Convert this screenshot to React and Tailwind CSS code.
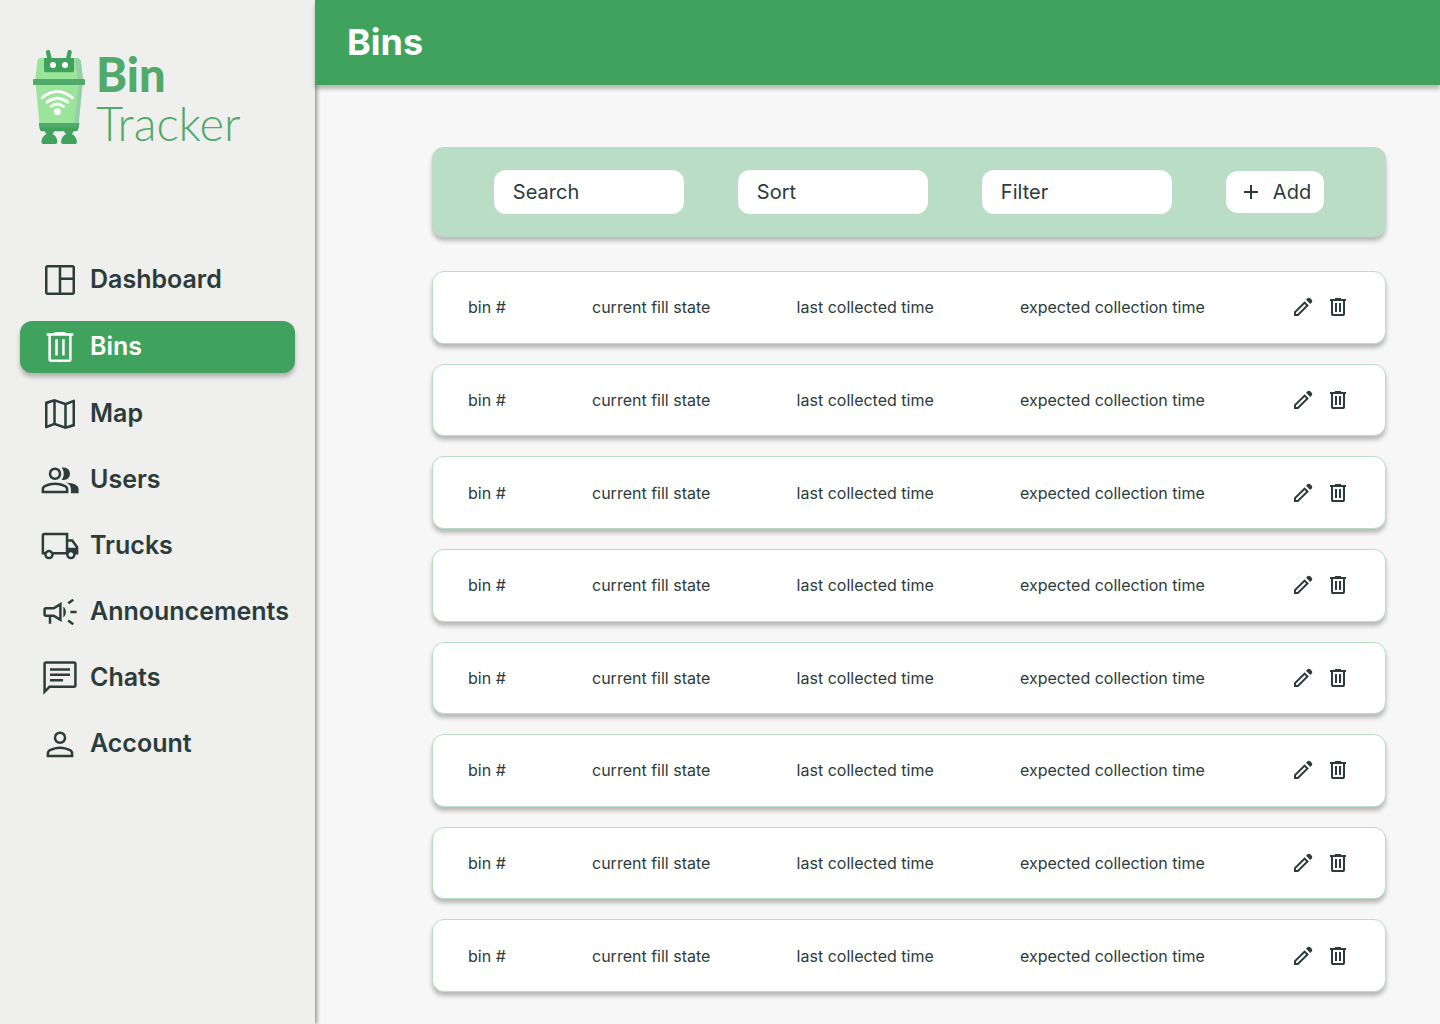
import React from "react";

const ICONS = {
  dashboard:
    "M9 42q-1.2 0-2.1-.9Q6 40.2 6 39V9q0-1.2.9-2.1Q7.8 6 9 6h30q1.2 0 2.1.9.9.9.9 2.1v30q0 1.2-.9 2.1-.9.9-2.1.9ZM9 39h13.5V9H9Zm16.5 0H39V24H25.5Zm0-18H39V9H25.5Z",
  bins: "M13.05 42q-1.2 0-2.1-.9-.9-.9-.9-2.1V10.5H8v-3h9.4V6h13.2v1.5H40v3h-2.05V39q0 1.2-.9 2.1-.9.9-2.1.9Zm21.9-31.5h-21.9V39h21.9Zm-16.6 23.7h3V14.75h-3Zm8.3 0h3V14.75h-3Z",
  map: "M30.6 42 17.3 37.35 7.9 41.1q-.7.3-1.3-.1-.6-.35-.6-1.15V10.5q0-.5.3-.9.3-.4.75-.55L17.3 5.95l13.3 4.6 9.5-3.7q.65-.25 1.27.1.63.3.63 1.05v29.9q0 .4-.28.7-.27.3-.67.45ZM29.1 38.3V13.2L18.9 9.6v25.1ZM32.1 38.3 39 36V10.6l-6.9 2.65ZM9 37.4l6.9-2.7V9.6L9 11.95Z",
  users:
    "M1.9 40v-4.7q0-1.75.9-3.175Q3.7 30.7 5.3 30q3.65-1.6 6.575-2.3Q14.8 27 18 27t6.1.7q2.9.7 6.55 2.3 1.6.7 2.525 2.125.925 1.425.925 3.175V40Zm35.2 0v-4.7q0-3.15-1.6-5.175t-4.2-3.275q3.45.4 6.5 1.175t4.95 1.775q1.65.95 2.6 2.35.95 1.4.95 3.15V40ZM18 23.95q-3.3 0-5.4-2.1-2.1-2.1-2.1-5.4 0-3.3 2.1-5.4 2.1-2.1 5.4-2.1 3.3 0 5.4 2.1 2.1 2.1 2.1 5.4 0 3.3-2.1 5.4-2.1 2.1-5.4 2.1Zm18-7.5q0 3.3-2.1 5.4-2.1 2.1-5.4 2.1-.55 0-1.225-.075T26.05 23.6q1.2-1.25 1.825-3.075.625-1.825.625-4.075t-.625-3.975Q27.25 10.75 26.05 9.3q.55-.15 1.225-.25t1.225-.1q3.3 0 5.4 2.1 2.1 2.1 2.1 5.4ZM4.9 37h26.2v-1.7q0-.8-.475-1.55T29.45 32.7q-3.6-1.6-6.05-2.15-2.45-.55-5.4-.55-2.95 0-5.425.55T6.5 32.7q-.7.3-1.15 1.05-.45.75-.45 1.55ZM18 20.95q1.95 0 3.225-1.275Q22.5 18.4 22.5 16.45q0-1.95-1.275-3.225Q19.95 11.95 18 11.95q-1.95 0-3.225 1.275Q13.5 14.5 13.5 16.45q0 1.95 1.275 3.225Q16.05 20.95 18 20.95Z",
  trucks:
    "M10.75 39.95q-2.4 0-4.075-1.675T5 34.2H1.95V11q0-1.2.9-2.1.9-.9 2.1-.9h29v7.95h5.5L46 25v9.2h-3.2q0 2.4-1.675 4.075T37.05 39.95q-2.4 0-4.075-1.675T31.3 34.2H16.5q0 2.4-1.675 4.075T10.75 39.95Zm0-3q1.15 0 1.95-.8t.8-1.95q0-1.15-.8-1.95t-1.95-.8q-1.15 0-1.95.8T8 34.2q0 1.15.8 1.95t1.95.8ZM4.95 31.2h.95q.8-1.15 2.05-1.95t2.8-.8q1.5 0 2.775.825T15.6 31.2h15.35V11h-26Zm32.1 5.75q1.15 0 1.95-.8t.8-1.95q0-1.15-.8-1.95t-1.95-.8q-1.15 0-1.95.8t-.8 1.95q0 1.15.8 1.95t1.95.8ZM33.95 26h9.2l-5.2-7.05h-4Z",
  announcements:
    "M36.5 25.5v-3H44v3ZM39 40l-6.05-4.5 1.8-2.4 6.05 4.5ZM34.85 14.8l-1.8-2.4L39 8l1.8 2.4ZM10.5 38v-8H7q-1.25 0-2.125-.875T4 27v-6q0-1.25.875-2.125T7 18h9l10-6v24l-10-6h-2.5v8Zm12.5-7.3V17.3L16.85 21H7v6h9.85ZM28 30.7V17.3q1.35 1.2 2.175 2.925Q31 21.95 31 24q0 2.05-.825 3.775Q29.35 29.5 28 30.7Z",
  chats:
    "M12 28.15h15.65v-3H12Zm0-6.45h24v-3H12Zm0-6.45h24v-3H12ZM4 44V7q0-1.15.9-2.075Q5.8 4 7 4h34q1.15 0 2.075.925Q44 5.85 44 7v26q0 1.15-.925 2.075Q42.15 36 41 36H12Zm3-7.25L10.75 33H41V7H7Z",
  account:
    "M24 23.95q-3.3 0-5.4-2.1-2.1-2.1-2.1-5.4 0-3.3 2.1-5.4 2.1-2.1 5.4-2.1 3.3 0 5.4 2.1 2.1 2.1 2.1 5.4 0 3.3-2.1 5.4-2.1 2.1-5.4 2.1ZM8 40v-4.7q0-1.9.95-3.25T11.4 30q3.35-1.5 6.425-2.25Q20.9 27 24 27q3.1 0 6.15.775t6.4 2.225q1.55.7 2.5 2.05.95 1.35.95 3.25V40Zm3-3h26v-1.7q0-.8-.475-1.525-.475-.725-1.175-1.075-3.2-1.55-5.85-2.125Q26.85 30 24 30t-5.55.575q-2.7.575-5.85 2.125-.7.35-1.15 1.075Q11 34.5 11 35.3Zm13-16.05q1.95 0 3.225-1.275Q28.5 18.4 28.5 16.45q0-1.95-1.275-3.225Q25.95 11.95 24 11.95q-1.95 0-3.225 1.275Q19.5 14.5 19.5 16.45q0 1.95 1.275 3.225Q22.05 20.95 24 20.95Z",
};

const SMALL_ICONS = {
  add: "M11 19v-6H5v-2h6V5h2v6h6v2h-6v6Z",
  edit: "M5 19h1.4l8.625-8.625-1.4-1.4L5 17.6ZM19.3 8.925l-4.25-4.2 1.4-1.4q.575-.575 1.413-.575.837 0 1.412.575l1.4 1.4q.575.575.6 1.388.025.812-.55 1.387ZM17.85 10.4 7.25 21H3v-4.25l10.6-10.6Z",
  remove:
    "M7 21q-.825 0-1.412-.587Q5 19.825 5 19V6H4V4h5V3h6v1h5v2h-1v13q0 .825-.587 1.413Q17.825 21 17 21ZM17 6H7v13h10ZM9 17h2V8H9Zm4 0h2V8h-2Z",
};

const NAV = [
  { label: "Dashboard", icon: "dashboard" },
  { label: "Bins", icon: "bins", active: true },
  { label: "Map", icon: "map" },
  { label: "Users", icon: "users" },
  { label: "Trucks", icon: "trucks" },
  { label: "Announcements", icon: "announcements" },
  { label: "Chats", icon: "chats" },
  { label: "Account", icon: "account" },
];

const BINS = [1, 2, 3, 4, 5, 6, 7, 8];

function NavIcon({ name }) {
  return (
    <svg viewBox="0 0 48 48" className="size-10 shrink-0 fill-current" fillRule="evenodd" aria-hidden="true">
      <path d={ICONS[name]} />
    </svg>
  );
}

function SmallIcon({ name }) {
  return (
    <svg viewBox="0 0 24 24" className="size-6 shrink-0 fill-current" fillRule="evenodd" aria-hidden="true">
      <path d={SMALL_ICONS[name]} />
    </svg>
  );
}

function Robot() {
  return (
    <svg viewBox="36 27 162 288" className="h-24 w-[54px] shrink-0" aria-hidden="true">
      <path d="M62 54H170Q181 55 183 66L189 118 176 250H58L46 118 52 64Q54 54 62 54Z" fill="#9be59a" />
      <path d="M164 54H168Q181 55 183 66L189 118 176 250H163L176 134Z" fill="#94cfa6" />
      <path d="M84 36 89 58M149 36 144 58" stroke="#40a35d" strokeWidth="13" strokeLinecap="round" />
      <path d="M72 54h90v38q0 5-5 5H77q-5 0-5-5Z" fill="#40a35d" />
      <circle cx="99" cy="75" r="9" fill="#fff" />
      <circle cx="135" cy="75" r="9" fill="#fff" />
      <rect x="39" y="117" width="156" height="18" rx="2" fill="#50ab6b" />
      <path d="M67 173Q112 136 157 173M81 186Q112 163 143 186M94 199Q112 185 130 199" fill="none" stroke="#fff" strokeWidth="9" strokeLinecap="round" />
      <circle cx="112" cy="215" r="10" fill="#fff" />
      <path d="M57 249H178L175 267Q174 274 167 274H67Q60 274 59 267Z" fill="#40a35d" />
      <path d="M57 249H178L176 262H59Z" fill="#50ab6b" />
      <path d="M74 272H103Q101 280 97 282 112 289 112 306 112 312 106 312H70Q64 312 64 306 65 289 80 282 76 280 74 272ZM132 272H161Q159 280 155 282 170 289 171 306 171 312 165 312H129Q123 312 123 306 124 289 139 282 134 280 132 272Z" fill="#40a35d" />
    </svg>
  );
}

function Sidebar() {
  return (
    <aside className="relative z-10 w-[315px] shrink-0 bg-[#efefed] px-5 pt-[49px] shadow-[2px_0_4px_rgba(0,0,0,0.4)]">
      <a href="#home" className="flex h-24 items-center gap-[10px] pl-3 text-[#50ab6b]">
        <Robot />
        <span className="flex flex-col pt-1 font-[Lato,sans-serif] text-[47px] leading-[49px]">
          <span className="font-black">Bin</span>
          <span className="font-light">Tracker</span>
        </span>
      </a>
      <nav className="mt-[109px] flex flex-col gap-[14px]">
        {NAV.map((item) => (
          <a
            key={item.label}
            href={"#" + item.icon}
            aria-current={item.active ? "page" : undefined}
            className={
              "flex h-[52px] items-center gap-[10px] rounded-xl pl-5 text-[25px] font-semibold " +
              (item.active ? "my-px bg-[#40a35d] text-white shadow-[0_4px_4px_rgba(0,0,0,0.25)]" : "")
            }
          >
            <NavIcon name={item.icon} />
            {item.label}
          </a>
        ))}
      </nav>
    </aside>
  );
}

function Toolbar() {
  const field = "h-11 w-[190px] min-w-0 appearance-none rounded-xl bg-white px-[19px] text-xl placeholder:text-[#2c3c3a] placeholder:opacity-100";
  return (
    <form className="flex h-[90px] items-center justify-center gap-[54px] rounded-xl bg-[#b9dec5] px-5 shadow-[0_4px_4px_rgba(0,0,0,0.25)]">
      <input type="text" aria-label="Search" placeholder="Search" className={field} />
      <select aria-label="Sort" className={field}>
        <option>Sort</option>
      </select>
      <select aria-label="Filter" className={field}>
        <option>Filter</option>
      </select>
      <button type="button" className="flex h-[42px] items-center gap-[10px] rounded-xl bg-white px-[13px] text-xl">
        <SmallIcon name="add" />
        Add
      </button>
    </form>
  );
}

function BinRow() {
  return (
    <li className="flex min-h-16 items-center justify-between rounded-xl border border-[#b9dec5] bg-white px-[35px] text-base shadow-[0_4px_4px_rgba(0,0,0,0.25)]">
      <span>bin #</span>
      <span>current fill state</span>
      <span>last collected time</span>
      <span>expected collection time</span>
      <span className="flex gap-[11px]">
        <button type="button" aria-label="Edit bin">
          <SmallIcon name="edit" />
        </button>
        <button type="button" aria-label="Delete bin">
          <SmallIcon name="remove" />
        </button>
      </span>
    </li>
  );
}

export default function App() {
  return (
    <div className="flex min-h-screen bg-[#f7f7f7] font-[Inter,sans-serif] text-[#2c3c3a]">
      <Sidebar />
      <div className="flex min-w-0 flex-1 flex-col">
        <header className="relative z-20 flex h-[85px] items-center bg-[#40a35d] px-8 pb-0.5 text-white shadow-[0_4px_4px_rgba(0,0,0,0.25)]">
          <h1 className="text-4xl font-bold">Bins</h1>
        </header>
        <main className="flex flex-1 flex-col gap-[34px] pt-[62px] pr-[54px] pb-8 pl-[117px]">
          <Toolbar />
          <ul className="grid flex-1 auto-rows-fr gap-5">
            {BINS.map((id) => (
              <BinRow key={id} />
            ))}
          </ul>
        </main>
      </div>
    </div>
  );
}
